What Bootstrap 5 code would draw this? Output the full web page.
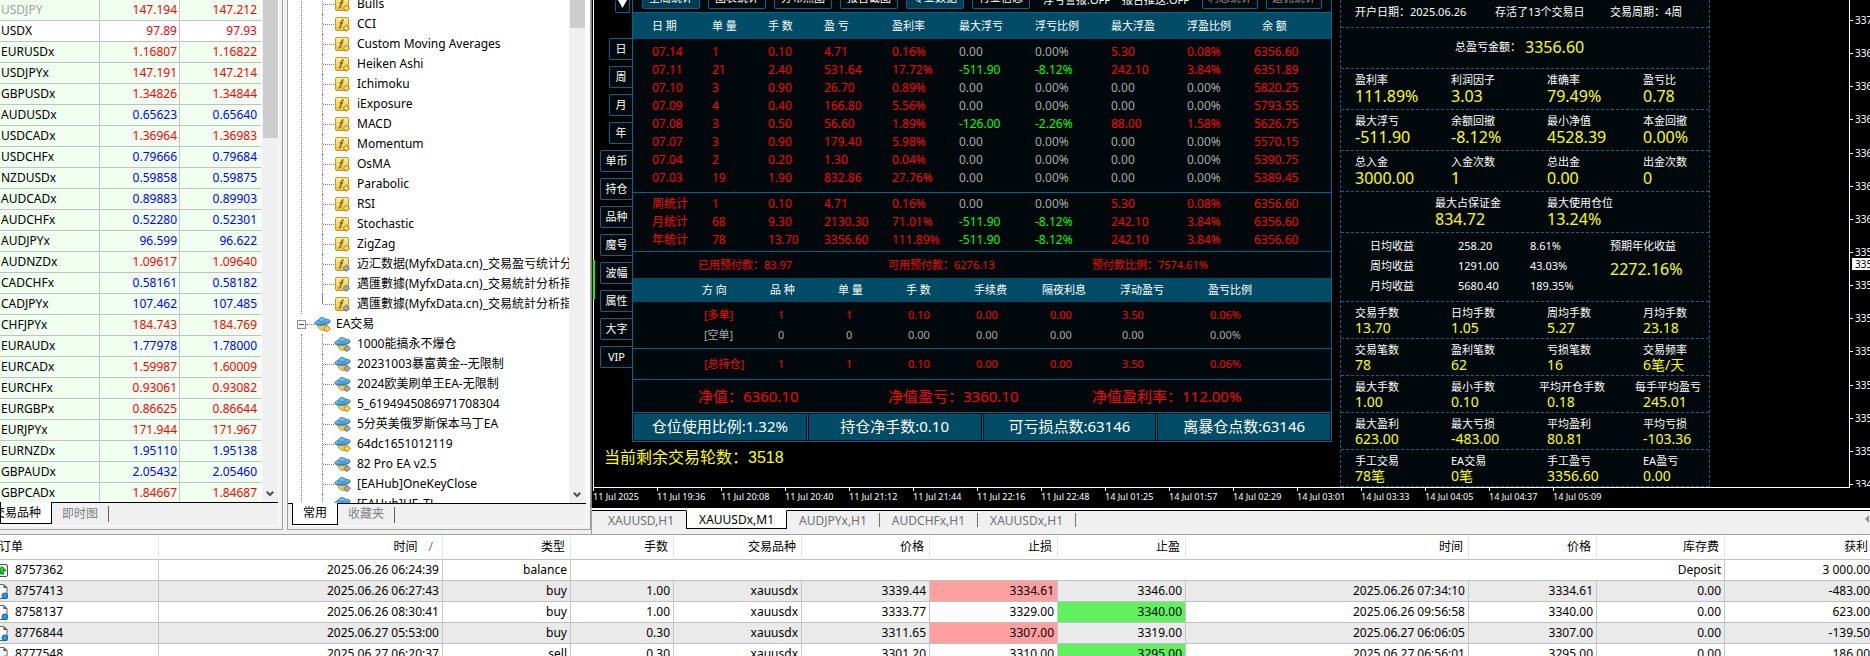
<!DOCTYPE html>
<html lang="zh-CN">
<head>
<meta charset="utf-8">
<meta name="viewport" content="width=device-width, initial-scale=1">
<title>XAUUSDx,M1</title>
<link rel="stylesheet" href="https://cdn.jsdelivr.net/npm/bootstrap@5.3.0/dist/css/bootstrap.min.css">
<style>
:root{--line:#00658a;--fill:#004c66;--ink:#00080b;--face:#f0f0f0}
body{font:12px/20px "Noto Sans","Noto Sans CJK SC",sans-serif;color:#000;background:var(--face)}
table,th,td{font-weight:400}
.table{--bs-table-bg:transparent;color:inherit;table-layout:fixed;border-collapse:separate;border-spacing:0}
.table th,.table td{padding:0;white-space:nowrap;font-weight:400;vertical-align:middle}
.table .up{color:#f00}.table .down{color:#00f}.table .off{color:#a0a0a0}
button{border-radius:0}

/* docked panels */
.dock{border-right:1px solid #a0a0a0;border-bottom:1px solid #a0a0a0;box-shadow:inset -3px -3px 0 var(--face),inset -4px -4px 0 #fff;margin-bottom:4px}
.dock-quotes{width:283px}
.dock-tree{width:304px;margin-left:4px;border-left:1px solid #a0a0a0}
.dock-body{min-height:0;overflow:hidden}
.dock-tabs{height:27px;border-top:1px solid #000;margin-right:4px}
.dock-tabs button{border:0;background:none;color:#808080;padding:0 10px;height:21px;line-height:20px;white-space:nowrap}
.dock-tabs button.active{background:#fff;color:#000;border:1px solid #000;border-top:0;margin-top:-1px;height:22px}
.dock-tabs hr{width:1px;height:16px;margin:3px 0;background:#606060;border:0;opacity:1}
.track{width:16px;margin-right:5px;background:var(--face);padding-bottom:4px}
.thumb{width:15px;background:#cdcdcd}
.quotes{width:262px}
.quotes td{height:21px;line-height:20px;border-right:1px solid #c8c8c8;border-bottom:1px solid #c0c0c0;background:#f0fff0;text-align:right}
.table.quotes td{padding-right:2px}
.table.quotes td:first-child{text-align:left;padding-left:1px}
.table.quotes td:last-child{border-right-color:#fff;padding-right:4px}
.quotes .plain td{background:#fff}

/* navigator tree */
.tree{margin-top:-6px;padding-left:13px}
.tree li{height:20px;white-space:nowrap}
.tree li,.branch{list-style:none}
.branch{position:relative;padding-left:21px;margin:0}
.branch::before{content:"";position:absolute;left:0;top:0;bottom:0;border-left:1px dotted #808080}
.branch li{display:flex;align-items:center;border-left:1px dotted #808080}
.branch li::before{content:"";flex:0 0 11px;border-top:1px dotted #808080}
.branch li.last{border-left:0;padding-left:1px;background:linear-gradient(#808080,#808080) 0 0/1px 10px no-repeat}
.branch svg{width:17px;height:17px;margin-right:6px}
.root{display:flex;align-items:center;margin-left:-4px}
.root svg{width:17px;height:17px;margin-right:5px}
.root .stub{width:8px;border-top:1px dotted #808080}
.minus{width:9px;height:9px;border:1px solid #909090;background:linear-gradient(#3050a0,#3050a0) center/5px 1px no-repeat #f4f4f4}

/* chart */
.chart{background:#000;border-left:1px solid #808080;padding-left:1px;min-height:0}
.plot{border-left:1px solid #fff;border-right:1px solid #fff;overflow:hidden}
.candle{position:absolute;left:593px;top:260px;width:2px;height:39px;background:#0f0}
.price-axis{width:20px;color:#fff;font-size:10px;line-height:12px;padding:14px 0 0;height:490px}
.price-axis span{padding-left:5px;background:linear-gradient(#fff,#fff) 0 6px/3px 1px no-repeat}
.price-axis .now{position:absolute;right:0;top:258px;width:18px;padding-left:3px;background:#fff;color:#000}
.time-axis{height:21px;border-top:1px solid #fff;margin-right:20px;color:#fff;font-size:9px;line-height:18px}
.time-axis span{flex:0 0 64px;white-space:nowrap;background:linear-gradient(#fff,#fff) 0 0/1px 3px no-repeat}
.chart-tabs{height:26px;border-top:2px solid #fff;box-shadow:inset 0 1px 0 #000;border-left:1px solid #a0a0a0}
.chart-tabs button{border:0;background:none;color:#707070;padding:0 12px;line-height:18px;height:19px;margin-top:1px}
.chart-tabs button.active{background:#fff;color:#000;border:1px solid #000;border-top-color:#fff;margin-top:0}
.chart-tabs hr{width:1px;height:14px;margin:3px 0 0;background:#707070;border:0;opacity:1}

/* statistics overlay */
.rail{width:38px;color:#fff;font-size:11px}
.rail button,.tool{height:22px;background:var(--ink);border:1px solid var(--line);color:#fff;padding:0;font-size:11px;line-height:18px}
.rail button{width:32px;border-right:0;border-radius:2px 0 0 2px;margin-top:6px}
.rail .slim{width:23px}
.rail .fold{width:15px;height:13px;border:1px solid var(--line);border-top:0;margin:0 2px 19px 0}
.report{flex:0 1 700px;background:var(--ink);border:1px solid var(--line);border-top:0;color:#f00}
.tools{height:12px;overflow:hidden;padding:0 9px 3px;color:#fff;font-size:11px;line-height:18px}
.tool{flex:0 0 58px;border-radius:2px}
.tool.dim{flex-basis:56px;color:#909090}
.tool.on{background:#003d55}
.table.daily,.table.held{color:#f00}
.band{background:var(--fill);color:#fff;font-size:11px}
.daily .band th{height:26px}
.daily td{height:18px;line-height:18px}
.day-rows{padding:4px 0 5px}
.total-rows{padding:2px 0}
.zero{color:#a8a8a8}.loss{color:#0f0}
.ruled{border-top:1px solid var(--line)}
.trio{display:grid;grid-template-columns:190px 204px 1fr;padding-left:65px;align-items:center}
.small-line{height:27px;font-size:11px}
.net-line{height:33px;font-size:15px}
.held{font-size:11px}
.held .band th{height:24px}
.table.held td{height:20px;line-height:20px;padding-left:2px}
.table.held td.qty{padding-left:8px}
.table.held .sum td{height:31px;border-top:1px solid var(--line)}
.table.held .pad td{height:3px;line-height:3px}
.boxes{padding:1px;gap:3px;height:29px}
.boxes div{background:var(--fill);color:#fff;font-size:15px;line-height:24px;text-align:center;flex:1;outline:1px solid #00080b;position:relative}
.boxes div+div{box-shadow:-2px 0 0 var(--line)}
.rounds{color:#ff0;font:16px/24px "Liberation Sans","Noto Sans CJK SC",sans-serif;padding:4px 10px}

.stats{flex:0 1 370px;min-width:0;margin-left:8px;background:var(--ink);border:1px dashed var(--line);border-top:0;color:#fff;font-size:11px}
.stats section{border-bottom:1px dashed var(--line)}
.quad{display:grid;grid-template-columns:repeat(4,96px);padding:4px 0 4px 14px;height:41px;line-height:14px}
.quad b,.big{display:block;font-weight:400;color:#ff0;font-size:16px;line-height:18px}
.quad.low{height:37px;padding-bottom:1px}
.quad.low b{font-size:14px;line-height:16px}
.quad .wide{margin-left:-8px}
.pair{grid-template-columns:112px 1fr;padding-left:94px}
.means{display:grid;grid-template-columns:88px 72px 80px 1fr;padding:3px 0 5px 29px;line-height:20px}
.means aside{grid-column:4;grid-row:1/4}
.opening{display:grid;grid-template-columns:140px 115px 1fr;padding-left:14px;height:28px;line-height:24px}
.profit{height:41px;padding:0 0 2px 114px}

/* terminal */
.terminal{flex:0 0 122px;border-top:1px solid #a0a0a0;background:#fff;overflow:hidden}
.orders{width:calc(100% + 4px)}
.orders th{height:25px;line-height:24px;text-align:right;border-right:1px solid #e4e4e4;border-bottom:1px solid #c0c0c0}
.table.orders th{padding-right:5px}
.orders td{height:21px;line-height:20px;text-align:right;border-right:1px solid #c8c8c8;border-bottom:1px solid #c0c0c0}
.table.orders td{padding-right:3px}
.orders th:first-child{text-align:left;text-indent:-1px}
.orders td:first-child{text-align:left}
.orders td svg{width:16px;height:19px;margin:0 7px 0 -8px;vertical-align:top}
.orders tbody tr:nth-child(even){background:#eaeaea}
.orders .sl{background:#ff9f9f}.orders .tp{background:#60f060}
</style>
</head>
<body class="vh-100 overflow-hidden d-flex flex-column">

<svg class="position-absolute" width="0" height="0" aria-hidden="true">
  <defs>
    <linearGradient id="gold" x1="0" y1="0" x2="0" y2="1"><stop offset="0" stop-color="#fff0a0"/><stop offset="1" stop-color="#e8c040"/></linearGradient>
    <linearGradient id="sky" x1="0" y1="0" x2="0" y2="1"><stop offset="0" stop-color="#8fd4f8"/><stop offset="1" stop-color="#2a86c8"/></linearGradient>
  </defs>
  <symbol id="i-fn" viewBox="0 0 17 17"><rect x="1.500" y="1.500" width="13" height="13" rx="1.500" fill="url(#gold)" stroke="#c0952a"/><path d="M9.800 4.200C8.300 3.600 7.900 4.600 7.600 6L6.500 10.500C6.300 11.400 5.800 11.900 4.800 11.500M5.600 6.800H9.300" fill="none" stroke="#8a6a10" stroke-width="1.500"/><path d="M12.300 9l3.200 3.200-3.200 3.200-3.200-3.200z" fill="#ffd850" stroke="#a87a18"/></symbol>
  <symbol id="i-fng" viewBox="0 0 17 17"><rect x="1.500" y="1.500" width="13" height="13" rx="1.500" fill="url(#gold)" stroke="#c0952a"/><path d="M9.800 4.200C8.300 3.600 7.900 4.600 7.600 6L6.500 10.500C6.300 11.400 5.800 11.900 4.800 11.500M5.600 6.800H9.300" fill="none" stroke="#8a6a10" stroke-width="1.500"/><path d="M12.300 9l3.200 3.200-3.200 3.200-3.200-3.200z" fill="#a8a8a8" stroke="#6c6c6c"/></symbol>
  <symbol id="i-ea" viewBox="0 0 17 17"><path d="M3.500 8c0 4 3 6.500 6 6.500s4-2 4-5z" fill="#f0cc48" stroke="#b08a20" stroke-width=".8"/><ellipse cx="8.500" cy="6.200" rx="7.800" ry="2.900" transform="rotate(-8 8.500 6.200)" fill="url(#sky)" stroke="#1f6ea8" stroke-width=".8"/><path d="M4.600 5.200C4.800 2.500 6 1.500 8 1.500s3.500.8 3.900 3.200c-2 1.200-5 1.400-7.300.5z" fill="#6cbcec" stroke="#2a7ab4" stroke-width=".8"/><path d="M13 9.300l3.200 3.200-3.200 3.200-3.200-3.200z" fill="#ffd850" stroke="#a87a18"/></symbol>
  <symbol id="i-eag" viewBox="0 0 17 17"><path d="M3.500 8c0 4 3 6.500 6 6.500s4-2 4-5z" fill="#f0cc48" stroke="#b08a20" stroke-width=".8"/><ellipse cx="8.500" cy="6.200" rx="7.800" ry="2.900" transform="rotate(-8 8.500 6.200)" fill="url(#sky)" stroke="#1f6ea8" stroke-width=".8"/><path d="M4.600 5.200C4.800 2.500 6 1.500 8 1.500s3.500.8 3.900 3.200c-2 1.200-5 1.400-7.300.5z" fill="#6cbcec" stroke="#2a7ab4" stroke-width=".8"/><path d="M13 9.300l3.200 3.200-3.200 3.200-3.200-3.200z" fill="#a8a8a8" stroke="#6c6c6c"/></symbol>
  <symbol id="i-deposit" viewBox="0 0 16 19"><rect x="2.500" y="4.500" width="13" height="12" rx="1.500" fill="#f4f4f4" stroke="#505050"/><path d="M10 6.500l4 4h-2.300v3.500H8.300v-3.500H6z" fill="#28c838" stroke="#0a7a18"/></symbol>
  <symbol id="i-buy" viewBox="0 0 16 19"><path d="M2.500 3.500H12l3 3v11H2.500z" fill="#fafafa" stroke="#606060"/><path d="M11.500 3.500v3.500h4z" fill="#505050"/><circle cx="12.800" cy="14.800" r="2.800" fill="#1e9cf0" stroke="#0a5ca8"/></symbol>
  <symbol id="i-sell" viewBox="0 0 16 19"><path d="M2.500 3.500H12l3 3v11H2.500z" fill="#fafafa" stroke="#606060"/><path d="M11.500 3.500v3.500h4z" fill="#505050"/><circle cx="12.800" cy="14.800" r="2.800" fill="#f04020" stroke="#a01808"/></symbol>
  <symbol id="i-down" viewBox="0 0 8 8"><path d="M.8 1.800L4 5l3.200-3.200" fill="none" stroke="#505050" stroke-width="2"/></symbol>
</svg>

<main class="d-flex flex-grow-1 overflow-hidden position-relative">

  <section class="dock dock-quotes flex-shrink-0 d-flex flex-column">
    <div class="dock-body bg-white d-flex flex-grow-1 me-1">
      <div class="flex-grow-1 overflow-hidden">
        <table class="table table-borderless m-0 quotes">
          <colgroup><col style="width:100px"><col style="width:80px"><col></colgroup>
          <tbody id="quotes"></tbody>
        </table>
      </div>
      <div class="track me-0 d-flex flex-column justify-content-between align-items-center">
        <div class="thumb" style="height:138px"></div><svg width="8" height="8"><use href="#i-down"/></svg>
      </div>
    </div>
    <div class="dock-tabs d-flex" role="tablist">
      <button class="active" role="tab" style="width:52px"><span class="d-block float-end">交易品种</span></button>
      <button role="tab">即时图</button><hr>
    </div>
  </section>

  <section class="dock dock-tree flex-shrink-0 d-flex flex-column">
    <div class="dock-body bg-white d-flex flex-grow-1">
      <div class="flex-grow-1 overflow-hidden">
        <div class="tree">
          <ul class="branch" id="indicators"></ul>
          <div class="root"><i class="minus"></i><i class="stub"></i><svg><use href="#i-ea"/></svg>EA交易</div>
          <ul class="branch" id="experts"></ul>
        </div>
      </div>
      <div class="track flex-shrink-0 d-flex flex-column justify-content-between align-items-center">
        <div class="thumb" style="height:28px"></div><svg width="8" height="8"><use href="#i-down"/></svg>
      </div>
    </div>
    <div class="dock-tabs d-flex" role="tablist">
      <button class="active ms-1" role="tab">常用</button>
      <button role="tab">收藏夹</button><hr>
    </div>
  </section>

  <section class="flex-grow-1 d-flex flex-column overflow-hidden">
    <div class="chart flex-grow-1 d-flex flex-column overflow-hidden">
      <div class="d-flex flex-grow-1 overflow-hidden">
        <div class="plot flex-grow-1 d-flex align-items-start">
          <div class="flex-shrink-1">
            <div class="d-flex">
              <nav class="rail d-flex flex-column align-items-end flex-shrink-0" id="rail">
                <button class="fold d-flex" aria-label="折叠"><svg width="13" height="8" viewBox="0 0 13 8"><path d="M2 0h9L6.500 8z" fill="#fff"/></svg></button>
              </nav>
              <div class="report">
                <div class="tools d-flex align-items-end gap-2">
                  <button class="tool on">全局统计</button><button class="tool">图表统计</button><button class="tool">分布热图</button><button class="tool">报告截图</button><button class="tool on">专业数据</button><button class="tool">行业信息</button>
                  <span class="text-nowrap ms-auto">浮亏警报:OFF</span><span class="text-nowrap ms-1">报告推送:OFF</span>
                  <button class="tool dim ms-auto">利息统计</button><button class="tool dim">返佣统计</button>
                </div>
                <table class="table table-borderless m-0 daily ruled">
                  <colgroup><col style="width:19px"><col style="width:60px"><col style="width:56px"><col style="width:56px"><col style="width:68px"><col style="width:67px"><col style="width:76px"><col style="width:76px"><col style="width:76px"><col style="width:67px"><col></colgroup>
                  <thead class="band"><tr><th></th><th>日 期</th><th>单 量</th><th>手 数</th><th>盈 亏</th><th>盈利率</th><th>最大浮亏</th><th>浮亏比例</th><th>最大浮盈</th><th>浮盈比例</th><th><span class="ps-2">余 额</span></th></tr></thead>
                </table>
                <div class="day-rows">
                  <table class="table table-borderless daily m-0">
                    <colgroup><col style="width:19px"><col style="width:60px"><col style="width:56px"><col style="width:56px"><col style="width:68px"><col style="width:67px"><col style="width:76px"><col style="width:76px"><col style="width:76px"><col style="width:67px"><col></colgroup>
                    <tbody id="days"></tbody>
                  </table>
                </div>
                <div class="ruled total-rows">
                  <table class="table table-borderless daily m-0">
                    <colgroup><col style="width:19px"><col style="width:60px"><col style="width:56px"><col style="width:56px"><col style="width:68px"><col style="width:67px"><col style="width:76px"><col style="width:76px"><col style="width:76px"><col style="width:67px"><col></colgroup>
                    <tbody id="totals"></tbody>
                  </table>
                </div>
                <div class="ruled trio small-line"><span>已用预付款：83.97</span><span>可用预付款：6276.13</span><span>预付款比例：7574.61%</span></div>
                <table class="table table-borderless m-0 held">
                  <colgroup><col style="width:69px"><col style="width:68px"><col style="width:68px"><col style="width:68px"><col style="width:68px"><col style="width:68px"><col style="width:78px"><col style="width:88px"><col></colgroup>
                  <thead class="band"><tr><th></th><th>方 向</th><th>品 种</th><th>单 量</th><th>手 数</th><th>手续费</th><th>隔夜利息</th><th>浮动盈亏</th><th>盈亏比例</th></tr></thead>
                  <tbody id="held"></tbody>
                </table>
                <div class="ruled trio net-line"><span>净值：6360.10</span><span>净值盈亏：3360.10</span><span>净值盈利率：112.00%</span></div>
                <div class="ruled boxes d-flex"><div>仓位使用比例:1.32%</div><div>持仓净手数:0.10</div><div>可亏损点数:63146</div><div>离暴仓点数:63146</div></div>
              </div>
            </div>
            <div class="rounds">当前剩余交易轮数：3518</div>
          </div>
          <div class="stats">
            <section class="opening"><span>开户日期：2025.06.26</span><span>存活了13个交易日</span><span>交易周期：4周</span></section>
            <section class="profit d-flex align-items-center"><span>总盈亏金额：</span><span class="big ms-1">3356.60</span></section>
            <section class="quad"><div>盈利率<b>111.89%</b></div><div>利润因子<b>3.03</b></div><div>准确率<b>79.49%</b></div><div>盈亏比<b>0.78</b></div></section>
            <section class="quad"><div>最大浮亏<b>-511.90</b></div><div>余额回撤<b>-8.12%</b></div><div>最小净值<b>4528.39</b></div><div>本金回撤<b>0.00%</b></div></section>
            <section class="quad"><div>总入金<b>3000.00</b></div><div>入金次数<b>1</b></div><div>总出金<b>0.00</b></div><div>出金次数<b>0</b></div></section>
            <section class="quad pair"><div>最大占保证金<b>834.72</b></div><div>最大使用仓位<b>13.24%</b></div></section>
            <section class="means">
              <span>日均收益</span><span>258.20</span><span>8.61%</span>
              <span>周均收益</span><span>1291.00</span><span>43.03%</span>
              <span>月均收益</span><span>5680.40</span><span>189.35%</span>
              <aside>预期年化收益<span class="big pt-1">2272.16%</span></aside>
            </section>
            <section class="quad low"><div>交易手数<b>13.70</b></div><div>日均手数<b>1.05</b></div><div>周均手数<b>5.27</b></div><div>月均手数<b>23.18</b></div></section>
            <section class="quad low"><div>交易笔数<b>78</b></div><div>盈利笔数<b>62</b></div><div>亏损笔数<b>16</b></div><div>交易频率<b>6笔/天</b></div></section>
            <section class="quad low"><div>最大手数<b>1.00</b></div><div>最小手数<b>0.10</b></div><div><span class="wide">平均开仓手数</span><b>0.18</b></div><div><span class="wide">每手平均盈亏</span><b>245.01</b></div></section>
            <section class="quad low"><div>最大盈利<b>623.00</b></div><div>最大亏损<b>-483.00</b></div><div>平均盈利<b>80.81</b></div><div>平均亏损<b>-103.36</b></div></section>
            <section class="quad low"><div>手工交易<b>78笔</b></div><div>EA交易<b>0笔</b></div><div>手工盈亏<b>3356.60</b></div><div>EA盈亏<b>0.00</b></div></section>
          </div>
        </div>
        <div class="price-axis flex-shrink-0 d-flex flex-column justify-content-between" id="prices"></div>
      </div>
      <div class="time-axis d-flex overflow-hidden" id="times"></div>
    </div>
    <div class="chart-tabs d-flex flex-shrink-0" role="tablist">
      <button role="tab" class="ps-3">XAUUSD,H1</button>
      <button role="tab" class="active">XAUUSDx,M1</button>
      <button role="tab">AUDJPYx,H1</button><hr>
      <button role="tab">AUDCHFx,H1</button><hr>
      <button role="tab">XAUUSDx,H1</button><hr>
      <svg class="ms-auto mt-1 me-0" width="6" height="10" viewBox="0 0 6 10"><path d="M5 1v8L1 5z" fill="#909090"/></svg>
    </div>
  </section>
  <i class="candle"></i>
</main>

<section class="terminal">
  <table class="table table-borderless m-0 orders">
    <colgroup><col style="width:159px"><col style="width:284px"><col style="width:128px"><col style="width:103px"><col style="width:128px"><col style="width:128px"><col style="width:128px"><col style="width:128px"><col><col style="width:128px"><col style="width:128px"><col style="width:149px"></colgroup>
    <thead><tr><th>订单</th><th>时间 <span class="ps-2 pe-1 text-secondary">/</span></th><th>类型</th><th>手数</th><th>交易品种</th><th>价格</th><th>止损</th><th>止盈</th><th>时间</th><th>价格</th><th>库存费</th><th>获利</th></tr></thead>
    <tbody id="orders"></tbody>
  </table>
</section>

<script src="https://cdn.jsdelivr.net/npm/bootstrap@5.3.0/dist/js/bootstrap.bundle.min.js"></script>
<script>
const fill = (id, html) => document.getElementById(id).insertAdjacentHTML('beforeend', html);

// symbol, bid, ask, direction of the last tick
fill('quotes', `USDJPY 147.194 147.212 u
USDX 97.89 97.93 u
EURUSDx 1.16807 1.16822 u
USDJPYx 147.191 147.214 u
GBPUSDx 1.34826 1.34844 u
AUDUSDx 0.65623 0.65640 d
USDCADx 1.36964 1.36983 u
USDCHFx 0.79666 0.79684 d
NZDUSDx 0.59858 0.59875 d
AUDCADx 0.89883 0.89903 d
AUDCHFx 0.52280 0.52301 d
AUDJPYx 96.599 96.622 d
AUDNZDx 1.09617 1.09640 u
CADCHFx 0.58161 0.58182 d
CADJPYx 107.462 107.485 d
CHFJPYx 184.743 184.769 u
EURAUDx 1.77978 1.78000 d
EURCADx 1.59987 1.60009 u
EURCHFx 0.93061 0.93082 u
EURGBPx 0.86625 0.86644 u
EURJPYx 171.944 171.967 u
EURNZDx 1.95110 1.95138 d
GBPAUDx 2.05432 2.05460 d
GBPCADx 1.84667 1.84687 u`.split('\n').map((row, i) => {
  const [s, bid, ask, d] = row.split(' '), c = d === 'u' ? 'up' : 'down';
  return `<tr class="${i === 1 ? 'plain' : ''}"><td class="${i ? '' : 'off'}">${s}</td><td class="${c}">${bid}</td><td class="${c}">${ask}</td></tr>`;
}).join(''));

const leaf = (icon, name, last) => `<li class="${last ? 'last' : ''}"><svg class="flex-shrink-0"><use href="#${icon}"/></svg>${name}</li>`;
const builtIn = ['Bulls', 'CCI', 'Custom Moving Averages', 'Heiken Ashi', 'Ichimoku', 'iExposure', 'MACD', 'Momentum', 'OsMA', 'Parabolic', 'RSI', 'Stochastic', 'ZigZag'];
fill('indicators', builtIn.map(n => leaf('i-fn', n)).join('')
  + leaf('i-fng', '迈汇数据(MyfxData.cn)_交易盈亏统计分析指标')
  + leaf('i-fng', '邁匯數據(MyfxData.cn)_交易統計分析指標')
  + leaf('i-fng', '邁匯數據(MyfxData.cn)_交易統計分析指標', true));
fill('experts', [['i-eag', '1000能搞永不爆仓'], ['i-eag', '20231003暴富黄金--无限制'], ['i-eag', '2024欧美刷单王EA-无限制'], ['i-ea', '5_6194945086971708304'], ['i-eag', '5分英美俄罗斯保本马丁EA'], ['i-ea', '64dc1651012119'], ['i-eag', '82 Pro EA v2.5'], ['i-eag', '[EAHub]OneKeyClose'], ['i-eag', '[EAHub]HF_TJ']].map(r => leaf(...r)).join(''));

fill('rail', ['日', '周', '月', '年', '单币', '持仓', '品种', '魔号', '波幅', '属性', '大字', 'VIP'].map(t => `<button class="${t.length === 1 ? 'slim' : ''}">${t}</button>`).join(''));

// drawdown values are green, untouched ones grey, the rest keep the red of the table
const tone = v => v.startsWith('-') ? 'loss' : /^0(\.00%?)?$/.test(v) ? 'zero' : '';
const days = rows => rows.split('\n').map(r => '<tr><td></td>' + r.split(' ').map(v => `<td class="${tone(v)}">${v}</td>`).join('') + '</tr>').join('');
fill('days', days(`07.14 1 0.10 4.71 0.16% 0.00 0.00% 5.30 0.08% 6356.60
07.11 21 2.40 531.64 17.72% -511.90 -8.12% 242.10 3.84% 6351.89
07.10 3 0.90 26.70 0.89% 0.00 0.00% 0.00 0.00% 5820.25
07.09 4 0.40 166.80 5.56% 0.00 0.00% 0.00 0.00% 5793.55
07.08 3 0.50 56.60 1.89% -126.00 -2.26% 88.00 1.58% 5626.75
07.07 3 0.90 179.40 5.98% 0.00 0.00% 0.00 0.00% 5570.15
07.04 2 0.20 1.30 0.04% 0.00 0.00% 0.00 0.00% 5390.75
07.03 19 1.90 832.86 27.76% 0.00 0.00% 0.00 0.00% 5389.45`));
fill('totals', days(`周统计 1 0.10 4.71 0.16% 0.00 0.00% 5.30 0.08% 6356.60
月统计 68 9.30 2130.30 71.01% -511.90 -8.12% 242.10 3.84% 6356.60
年统计 78 13.70 3356.60 111.89% -511.90 -8.12% 242.10 3.84% 6356.60`));

const held = (cls, cells) => `<tr class="${cls}"><td></td>` + cells.map((v, i) => `<td class="${i === 1 || i === 2 || i === 5 ? 'qty' : ''}">${v}</td>`).join('') + '</tr>';
const gap = '<tr class="pad"><td colspan="9"></td></tr>';
fill('held', gap + held('', ['[多单]', '1', '1', '0.10', '0.00', '0.00', '3.50', '0.06%'])
  + held('zero', ['[空单]', '0', '0', '0.00', '0.00', '0.00', '0.00', '0.00%']) + gap
  + held('sum', ['[总持仓]', '1', '1', '0.10', '0.00', '0.00', '3.50', '0.06%']));

fill('prices', [337, 336, 336, 336, 336, 336, 336, 335, 335, 335, 335, 335, 335, 335, 334].map(p => `<span>${p}</span>`).join('') + '<span class="now">335</span>');
fill('times', ['11 Jul 2025', '11 Jul 19:36', '11 Jul 20:08', '11 Jul 20:40', '11 Jul 21:12', '11 Jul 21:44', '11 Jul 22:16', '11 Jul 22:48', '14 Jul 01:25', '14 Jul 01:57', '14 Jul 02:29', '14 Jul 03:01', '14 Jul 03:33', '14 Jul 04:05', '14 Jul 04:37', '14 Jul 05:09'].map(t => `<span>${t}</span>`).join(''));

fill('orders', '<tr><td><svg><use href="#i-deposit"/></svg>8757362</td><td>2025.06.26 06:24:39</td><td>balance</td><td colspan="8">Deposit</td><td>3 000.00</td></tr>' + [
  ['8757413', '2025.06.26 06:27:43', 'buy', '1.00', 'xauusdx', '3339.44', '3334.61', '3346.00', '2025.06.26 07:34:10', '3334.61', '0.00', '-483.00'],
  ['8758137', '2025.06.26 08:30:41', 'buy', '1.00', 'xauusdx', '3333.77', '3329.00', '3340.00', '2025.06.26 09:56:58', '3340.00', '0.00', '623.00'],
  ['8776844', '2025.06.27 05:53:00', 'buy', '0.30', 'xauusdx', '3311.65', '3307.00', '3319.00', '2025.06.27 06:06:05', '3307.00', '0.00', '-139.50'],
  ['8777548', '2025.06.27 06:20:37', 'sell', '0.30', 'xauusdx', '3301.20', '3310.00', '3295.00', '2025.06.27 06:56:01', '3295.00', '0.00', '186.00']
].map(r => '<tr>' + r.map((v, i) => `<td class="${i === 6 && v === r[9] ? 'sl' : i === 7 && v === r[9] ? 'tp' : ''}">${i ? '' : `<svg><use href="#i-${r[2]}"/></svg>`}${v}</td>`).join('') + '</tr>').join(''));
</script>
</body>
</html>
